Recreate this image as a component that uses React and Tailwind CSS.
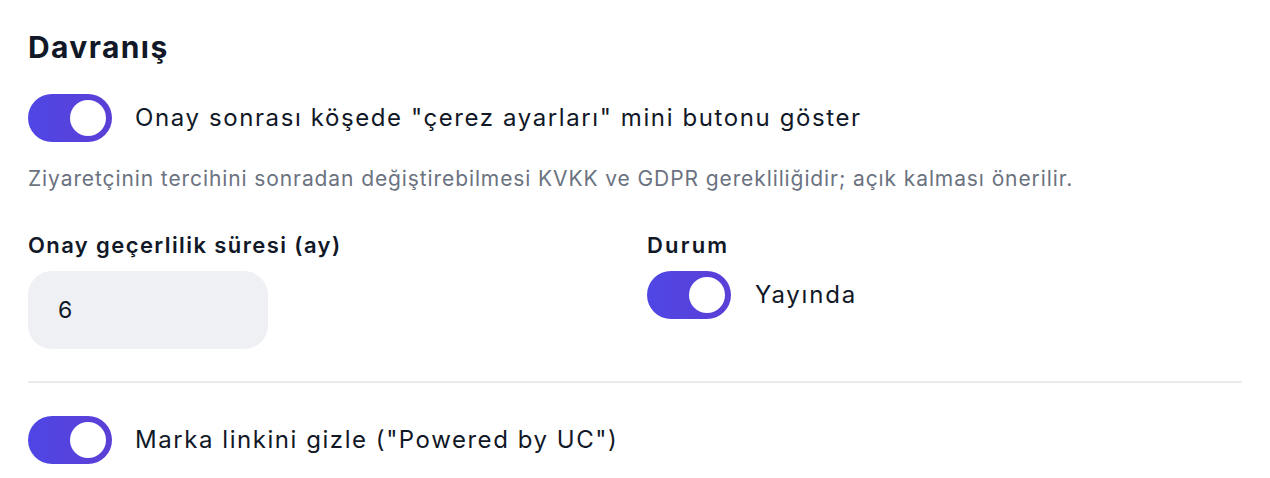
import React, { useState } from "react";

const Toggle = ({ on, onChange }) => (
  <button
    type="button"
    onClick={() => onChange(!on)}
    className={
      "flex items-center w-[84px] h-[48px] shrink-0 rounded-full p-[6px] transition-colors " +
      (on
        ? "justify-end bg-gradient-to-r from-[#4f46e5] to-[#5b3fd6]"
        : "justify-start bg-[#d1d5db]")
    }
  >
    <span className="block w-[36px] h-[36px] rounded-full bg-white" />
  </button>
);

const App = () => {
  const [miniButton, setMiniButton] = useState(true);
  const [live, setLive] = useState(true);
  const [hideBrand, setHideBrand] = useState(true);
  const [months, setMonths] = useState("6");

  return (
    <div
      className="min-h-screen w-full bg-white text-[#111827] px-[28px] pt-[29px]"
      style={{ fontFamily: '"Inter", "Noto Sans", sans-serif' }}
    >
      <h2 className="text-[30px] leading-[36px] font-bold tracking-[1.4px]">Davranış</h2>

      {/* corner mini button toggle */}
      <div className="flex items-center gap-[23px] mt-[29px]">
        <Toggle on={miniButton} onChange={setMiniButton} />
        <span className="text-[24px] leading-[36px] font-normal tracking-[1.6px]">
          Onay sonrası köşede "çerez ayarları" mini butonu göster
        </span>
      </div>
      <p className="text-[21px] leading-[31.5px] text-[#6b7280] mt-[21px] tracking-[0.9px]">
        Ziyaretçinin tercihini sonradan değiştirebilmesi KVKK ve GDPR gerekliliğidir; açık kalması önerilir.
      </p>

      <div className="grid grid-cols-2 gap-x-[24px] mt-[35px]">
        <div className="flex flex-col gap-[10px]">
          <label className="text-[22px] leading-[31.5px] font-semibold tracking-[1.4px]">
            Onay geçerlilik süresi (ay)
          </label>
          <input
            value={months}
            onChange={(e) => setMonths(e.target.value)}
            className="w-[240px] h-[78px] rounded-[24px] bg-[#eff0f3] px-[30px] text-[23px] text-[#111827] outline-none"
          />
        </div>
        <div className="flex flex-col gap-[10px]">
          <label className="text-[22px] leading-[31.5px] font-semibold tracking-[2.2px]">Durum</label>
          <div className="flex items-center gap-[24px]">
            <Toggle on={live} onChange={setLive} />
            <span className="text-[24px] leading-[36px] font-normal tracking-[1.8px]">
              {live ? "Yayında" : "Taslak"}
            </span>
          </div>
        </div>
      </div>

      <div className="h-[2px] bg-[#ebebed] mt-[32px]" />

      <div className="flex items-center gap-[23px] mt-[33px]">
        <Toggle on={hideBrand} onChange={setHideBrand} />
        <span className="text-[24px] leading-[36px] font-normal tracking-[1.55px]">
          Marka linkini gizle ("Powered by UC")
        </span>
      </div>
    </div>
  );
};

export default App;
